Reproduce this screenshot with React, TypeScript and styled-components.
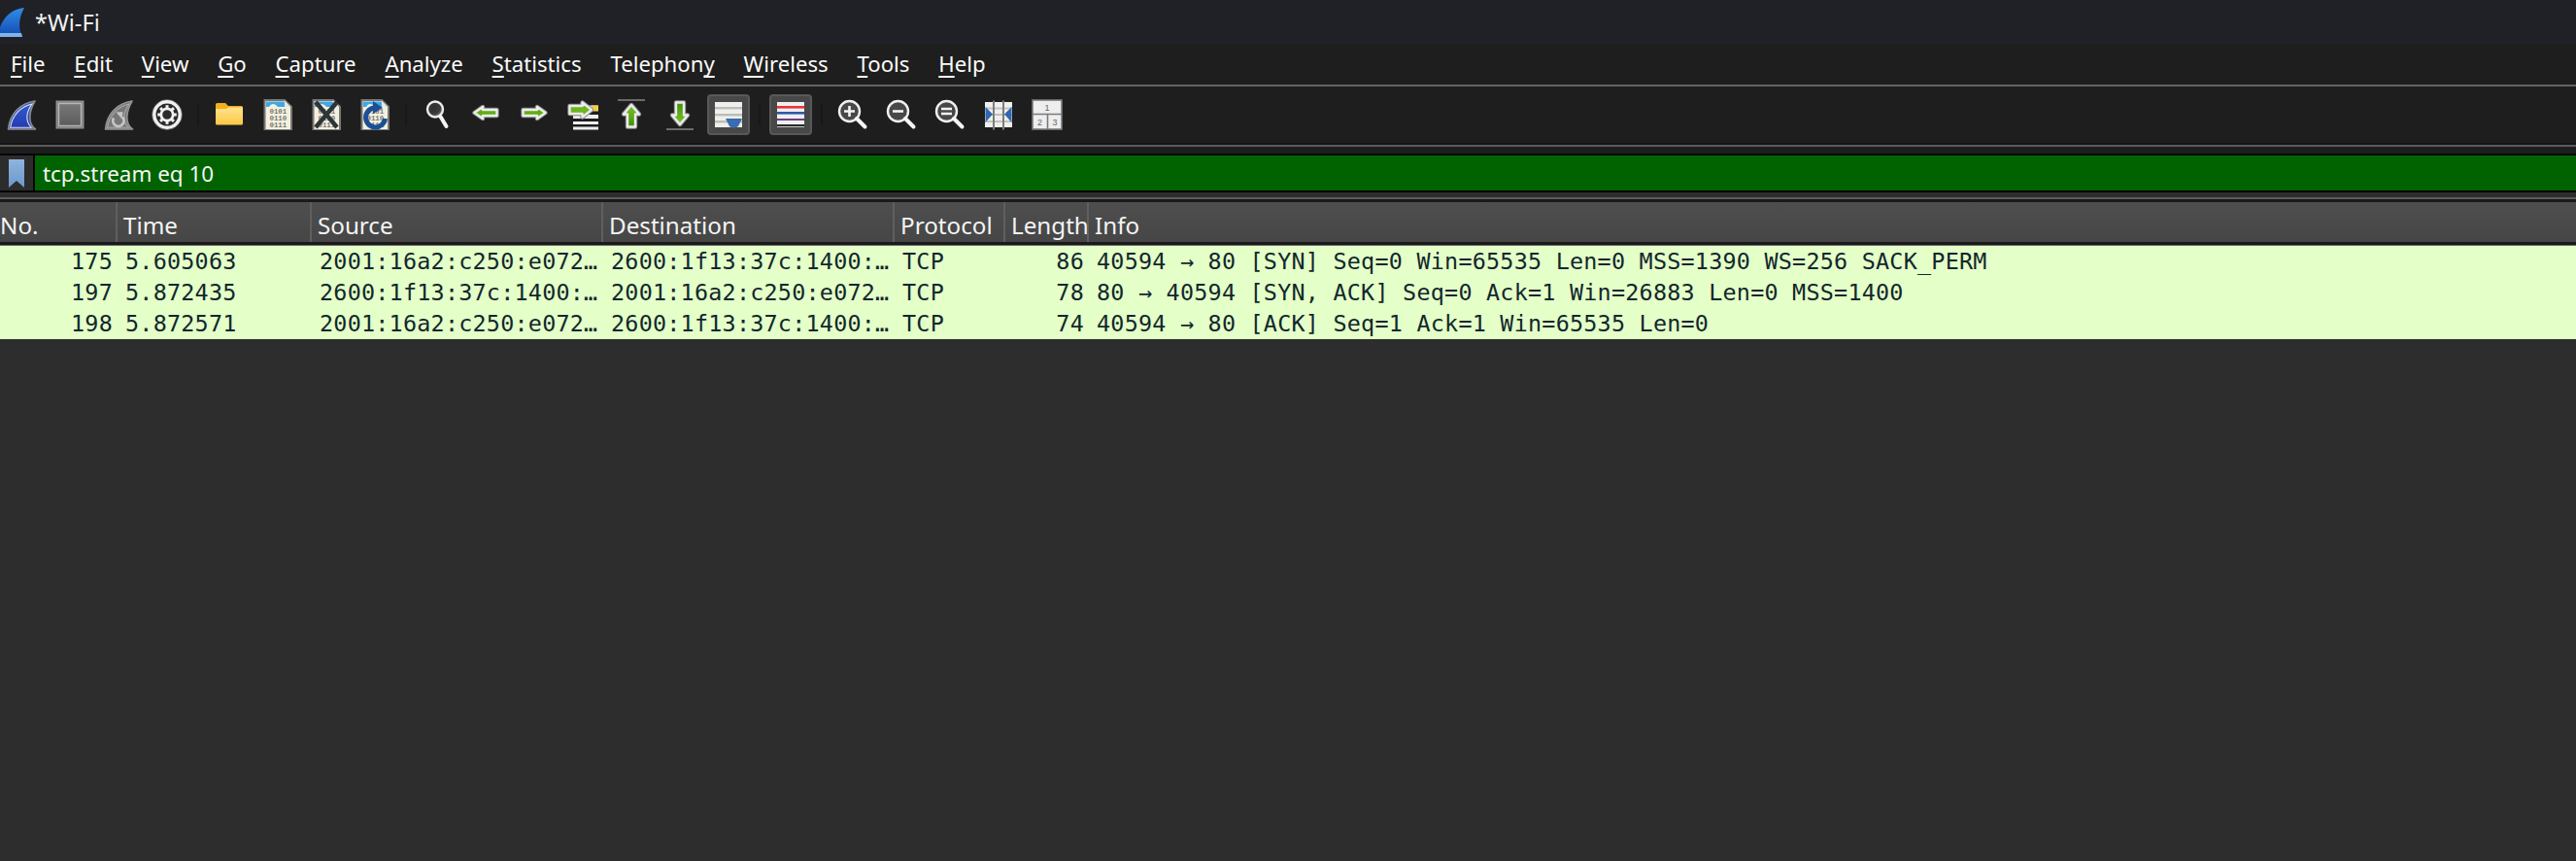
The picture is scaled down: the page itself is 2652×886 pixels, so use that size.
import React from 'react';
import styled, { createGlobalStyle } from 'styled-components';

const GlobalStyle = createGlobalStyle`
  html, body {
    margin: 0;
    padding: 0;
    background: #2d2d2d;
  }
`;

const uiFont = `"Noto Sans", "Open Sans", sans-serif`;

const menus = [
  ['', 'F', 'ile'],
  ['', 'E', 'dit'],
  ['', 'V', 'iew'],
  ['', 'G', 'o'],
  ['', 'C', 'apture'],
  ['', 'A', 'nalyze'],
  ['', 'S', 'tatistics'],
  ['Telephon', 'y', ''],
  ['', 'W', 'ireless'],
  ['', 'T', 'ools'],
  ['', 'H', 'elp'],
];

const columns = ['No.', 'Time', 'Source', 'Destination', 'Protocol', 'Length', 'Info'];

const packets = [
  {
    no: '175',
    time: '5.605063',
    src: '2001:16a2:c250:e072…',
    dst: '2600:1f13:37c:1400:…',
    proto: 'TCP',
    len: '86',
    info: '40594 → 80 [SYN] Seq=0 Win=65535 Len=0 MSS=1390 WS=256 SACK_PERM',
  },
  {
    no: '197',
    time: '5.872435',
    src: '2600:1f13:37c:1400:…',
    dst: '2001:16a2:c250:e072…',
    proto: 'TCP',
    len: '78',
    info: '80 → 40594 [SYN, ACK] Seq=0 Ack=1 Win=26883 Len=0 MSS=1400',
  },
  {
    no: '198',
    time: '5.872571',
    src: '2001:16a2:c250:e072…',
    dst: '2600:1f13:37c:1400:…',
    proto: 'TCP',
    len: '74',
    info: '40594 → 80 [ACK] Seq=1 Ack=1 Win=65535 Len=0',
  },
];

const Svg = ({ children }: { children: React.ReactNode }) => (
  <svg width="32" height="32" viewBox="0 0 32 32" fill="none">
    {children}
  </svg>
);

const sharkPath = 'M30 2 C15 4 4 15 2.5 31 H30.5 C22 25 24 12 30 2 Z';
const sharkInner = 'M27 5 C16 7.5 6.5 16 4.7 29.3 H26.5 C19.5 23 21 13 27 5 Z';

const SharkIcon = () => (
  <Svg>
    <defs>
      <linearGradient id="sharkBlue" x1="0" y1="0" x2="0" y2="1">
        <stop offset="0" stopColor="#3560d0" />
        <stop offset="1" stopColor="#2438b0" />
      </linearGradient>
    </defs>
    <path d={sharkPath} fill="url(#sharkBlue)" stroke="#8c8c8c" strokeWidth="1.6" strokeLinejoin="round" />
    <path d={sharkInner} stroke="#dfe3ee" strokeWidth="1.1" />
  </Svg>
);

const StopIcon = () => (
  <Svg>
    <defs>
      <linearGradient id="stopGrey" x1="0" y1="0" x2="0" y2="1">
        <stop offset="0" stopColor="#7a7a7a" />
        <stop offset="1" stopColor="#595959" />
      </linearGradient>
    </defs>
    <rect x="2.5" y="2.5" width="27" height="27" fill="url(#stopGrey)" stroke="#8e8e8e" strokeWidth="2" />
    <rect x="4.5" y="4.5" width="23" height="23" stroke="#b8b8b8" strokeWidth="1.4" />
  </Svg>
);

const RestartIcon = () => (
  <Svg>
    <path d={sharkPath} fill="#777" stroke="#949494" strokeWidth="1.6" strokeLinejoin="round" />
    <path d={sharkInner} stroke="#a8a8a8" strokeWidth="1.1" />
    <path d="M11 19.5 A5.6 5.6 0 1 0 20 18.5" stroke="#c4c4c4" strokeWidth="2.8" />
    <path d="M13.5 13.5 L20.5 13 L19.5 20.5 Z" fill="#c4c4c4" />
  </Svg>
);

const gearTeeth = [0, 45, 90, 135, 180, 225, 270, 315];

const GearIcon = () => (
  <Svg>
    <circle cx="16" cy="16" r="15.4" stroke="#6e6e6e" strokeWidth="1" />
    <circle cx="16" cy="16" r="13.2" fill="#2a2a2a" stroke="#f0f0f0" strokeWidth="3.4" />
    <circle cx="16" cy="16" r="6.2" stroke="#f0f0f0" strokeWidth="2.8" />
    {gearTeeth.map((a) => (
      <rect key={a} x="14.5" y="6.2" width="3" height="3.4" fill="#f0f0f0" transform={`rotate(${a} 16 16)`} />
    ))}
  </Svg>
);

const FolderIcon = () => (
  <Svg>
    <defs>
      <linearGradient id="folderFill" x1="0" y1="0" x2="0" y2="1">
        <stop offset="0" stopColor="#ffe28a" />
        <stop offset="1" stopColor="#fcc845" />
      </linearGradient>
    </defs>
    <path d="M2 5.5 Q2 4 3.5 4 H12 L15 7 H28.5 Q30 7 30 8.5 V12 H2 Z" fill="#f2ae1c" />
    <path d="M2 10 H13 L15 8.5 H30 V25 Q30 26.5 28.5 26.5 H3.5 Q2 26.5 2 25 Z" fill="url(#folderFill)" />
  </Svg>
);

const FileBase = ({ children }: { children?: React.ReactNode }) => (
  <Svg>
    <path d="M2.5 1 H23 L30 8 V32 H2.5 Z" fill="#f3f1dd" stroke="#777" strokeWidth="2" />
    <path d="M4 2.5 H22 L28 8 H16 C13 4 9 4 7 8 H4 Z" fill="#3fa7e6" />
    <path d="M23 1.5 V8.2 H29.5 Z" fill="#e6e6e6" />
    <g fontFamily='"Liberation Mono", monospace' fontSize="7.4" fill="#777" fontWeight="bold">
      <text x="7.5" y="15">0101</text>
      <text x="7.5" y="22">0110</text>
      <text x="7.5" y="29">0111</text>
    </g>
    {children}
  </Svg>
);

const CloseFileIcon = () => (
  <FileBase>
    <path d="M5 3 L27 29 M27 3 L5 29" stroke="#2e3538" strokeWidth="4.5" />
  </FileBase>
);

const ReloadFileIcon = () => (
  <FileBase>
    <path d="M15 9 A10 10 0 1 0 26.5 20" stroke="#1c4f96" strokeWidth="5" />
    <path d="M14 2 L24 9 L14 15 Z" fill="#1c4f96" />
  </FileBase>
);

const FindIcon = () => (
  <Svg>
    <defs>
      <radialGradient id="lensFill" cx="0.4" cy="0.35" r="0.7">
        <stop offset="0" stopColor="#303030" />
        <stop offset="0.6" stopColor="#3a3a3a" />
        <stop offset="1" stopColor="#8a8a8a" />
      </radialGradient>
    </defs>
    <circle cx="14" cy="10.5" r="8" fill="url(#lensFill)" stroke="#ececec" strokeWidth="2.4" />
    <path d="M19.5 18 L25.5 28" stroke="#f4f4f4" strokeWidth="4" strokeLinecap="round" />
  </Svg>
);

const ZoomIcon = ({ mark }: { mark: 'in' | 'out' | 'reset' }) => (
  <Svg>
    <circle cx="12.5" cy="12.5" r="10.5" fill="#484848" stroke="#f0f0f0" strokeWidth="2.4" />
    <path d="M20 20 L28.5 28.5" stroke="#f4f4f4" strokeWidth="4" strokeLinecap="round" />
    {mark === 'in' && <path d="M7 12.5 H18 M12.5 7 V18" stroke="#f4f4f4" strokeWidth="2.6" />}
    {mark === 'out' && <path d="M7 12.5 H18" stroke="#f4f4f4" strokeWidth="2.6" />}
    {mark === 'reset' && <path d="M7 10 H18 M7 15 H18" stroke="#f4f4f4" strokeWidth="2.4" />}
  </Svg>
);

const Arrow = ({ d, fill = '#5fae12' }: { d: string; fill?: string }) => (
  <>
    <path d={d} stroke="#8a8a8a" strokeWidth="4.4" strokeLinejoin="round" />
    <path d={d} fill={fill} stroke="#ececec" strokeWidth="2.4" strokeLinejoin="round" />
  </>
);

const BackIcon = () => (
  <Svg>
    <Arrow d="M4.5 14 L13 8 V11 H27.5 V17 H13 V20 Z" />
  </Svg>
);

const ForwardIcon = () => (
  <Svg>
    <Arrow d="M27.5 14 L19 8 V11 H4.5 V17 H19 V20 Z" />
  </Svg>
);

const GoToIcon = () => (
  <Svg>
    <rect x="6" y="6.5" width="26" height="5" fill="#eee" />
    <rect x="25" y="6.5" width="7" height="6" fill="#f2d04a" />
    <rect x="6" y="16" width="26" height="4" fill="#eee" />
    <rect x="6" y="23" width="26" height="3" fill="#eee" />
    <rect x="6" y="28.5" width="26" height="3" fill="#eee" />
    <Arrow d="M25 11 L15.5 3.5 V7 H2.5 V15 H15.5 V18.5 Z" fill="#6cb61e" />
  </Svg>
);

const FirstIcon = () => (
  <Svg>
    <path d="M2 1 H30" stroke="#6b6b6b" strokeWidth="2" />
    <defs>
      <linearGradient id="upGreen" x1="0" y1="0" x2="0" y2="1">
        <stop offset="0" stopColor="#7cc528" />
        <stop offset="1" stopColor="#3f8f0a" />
      </linearGradient>
    </defs>
    <Arrow d="M16 6 L24 15.5 H20 V28.5 H12 V15.5 H8 Z" fill="url(#upGreen)" />
  </Svg>
);

const LastIcon = () => (
  <Svg>
    <path d="M2 31 H30" stroke="#6b6b6b" strokeWidth="2" />
    <defs>
      <linearGradient id="downGreen" x1="0" y1="0" x2="0" y2="1">
        <stop offset="0" stopColor="#3f8f0a" />
        <stop offset="1" stopColor="#7cc528" />
      </linearGradient>
    </defs>
    <Arrow d="M16 26 L24 16.5 H20 V3.5 H12 V16.5 H8 Z" fill="url(#downGreen)" />
  </Svg>
);

const AutoScrollIcon = () => (
  <Svg>
    <rect x="2" y="3" width="28" height="26" fill="#efefef" />
    <rect x="2" y="8" width="28" height="2.4" fill="#bdbdb2" />
    <rect x="2" y="15" width="28" height="2.4" fill="#bdbdb2" />
    <rect x="2" y="22" width="28" height="2.4" fill="#bdbdb2" />
    <path d="M13 20 H30 L26 28 Q21.5 31.5 17 28 Z" fill="#3a6cb0" />
  </Svg>
);

const ColorizeIcon = () => (
  <Svg>
    <rect x="2" y="3" width="28" height="26" fill="#efefef" />
    <rect x="2" y="7" width="28" height="2.6" fill="#e8333a" />
    <rect x="2" y="13" width="28" height="2.6" fill="#2f5aa8" />
    <rect x="2" y="20" width="28" height="2" fill="#6b3d85" />
    <rect x="2" y="26" width="28" height="2.2" fill="#2a2a2a" />
  </Svg>
);

const ResizeIcon = () => (
  <Svg>
    <rect x="2" y="3" width="28" height="26" fill="#efefef" />
    <rect x="2" y="8.5" width="28" height="2" fill="#c2c2b6" />
    <rect x="2" y="15" width="28" height="2" fill="#c2c2b6" />
    <rect x="2" y="22" width="28" height="2" fill="#c2c2b6" />
    <rect x="10" y="1.5" width="2" height="30" fill="#7c7c7c" />
    <rect x="20" y="1.5" width="2" height="30" fill="#7c7c7c" />
    <path d="M2.5 8 L10 15.5 L2.5 24 Z M29.5 8 L22 15.5 L29.5 24 Z" fill="#2f68b0" />
  </Svg>
);

const PanesIcon = () => (
  <Svg>
    <rect x="1" y="1" width="30" height="30" fill="#eeeeee" stroke="#7a7a7a" strokeWidth="1.6" />
    <path d="M1 15.5 H31 M16.5 15.5 V31" stroke="#7a7a7a" strokeWidth="1.6" />
    <g fontFamily='"Liberation Sans", sans-serif' fontSize="9" fill="#666" textAnchor="middle">
      <text x="16" y="11.5">1</text>
      <text x="8.5" y="26.5">2</text>
      <text x="24" y="26.5">3</text>
    </g>
  </Svg>
);

const App = () => {
  return (
    <Page>
      <GlobalStyle />
      <TitleBar>
        <svg width="25" height="30" viewBox="0 0 25 30" fill="none">
          <defs>
            <linearGradient id="appShark" x1="0" y1="0" x2="0" y2="1">
              <stop offset="0" stopColor="#2f8ee8" />
              <stop offset="1" stopColor="#1448b4" />
            </linearGradient>
          </defs>
          <path d="M25 0 C13 1 4 9 0 20 V30 H23 C18 20 20 9 25 0 Z" fill="url(#appShark)" />
          <path d="M0 26 H22 L23 30 H0 Z" fill="#7fb4e8" />
        </svg>
        <TitleText>*Wi-Fi</TitleText>
      </TitleBar>
      <MenuBar>
        {menus.map(([before, key, after]) => (
          <MenuItem key={before + key + after}>
            {before}
            <Mnemonic>{key}</Mnemonic>
            {after}
          </MenuItem>
        ))}
      </MenuBar>
      <Toolbar>
        <ToolButton><SharkIcon /></ToolButton>
        <ToolButton><StopIcon /></ToolButton>
        <ToolButton><RestartIcon /></ToolButton>
        <ToolButton><GearIcon /></ToolButton>
        <ToolSeparator />
        <ToolButton><FolderIcon /></ToolButton>
        <ToolButton><FileBase /></ToolButton>
        <ToolButton><CloseFileIcon /></ToolButton>
        <ToolButton><ReloadFileIcon /></ToolButton>
        <ToolSeparator />
        <ToolButton><FindIcon /></ToolButton>
        <ToolButton><BackIcon /></ToolButton>
        <ToolButton><ForwardIcon /></ToolButton>
        <ToolButton><GoToIcon /></ToolButton>
        <ToolButton><FirstIcon /></ToolButton>
        <ToolButton><LastIcon /></ToolButton>
        <ToolButton $pressed><AutoScrollIcon /></ToolButton>
        <ToolSeparator />
        <ToolButton $pressed><ColorizeIcon /></ToolButton>
        <ToolSeparator />
        <ToolButton><ZoomIcon mark="in" /></ToolButton>
        <ToolButton><ZoomIcon mark="out" /></ToolButton>
        <ToolButton><ZoomIcon mark="reset" /></ToolButton>
        <ToolButton><ResizeIcon /></ToolButton>
        <ToolButton><PanesIcon /></ToolButton>
      </Toolbar>
      <FilterBar>
        <FilterFrame>
          <BookmarkButton>
            <svg width="18" height="30" viewBox="0 0 18 30">
              <defs>
                <linearGradient id="bookmarkBlue" x1="0" y1="0" x2="0" y2="1">
                  <stop offset="0" stopColor="#8fb4de" />
                  <stop offset="1" stopColor="#6a98cc" />
                </linearGradient>
              </defs>
              <path d="M1 1 H17 V30 L9 23 L1 30 Z" fill="url(#bookmarkBlue)" />
            </svg>
          </BookmarkButton>
          <FilterInput>tcp.stream eq 10</FilterInput>
        </FilterFrame>
      </FilterBar>
      <PacketList>
        <HeaderRow>
          {columns.map((c, i) => (
            <HeaderCell key={c} $first={i === 0}>{c}</HeaderCell>
          ))}
        </HeaderRow>
        <Rows>
          {packets.map((p) => (
            <PacketRow key={p.no}>
              <Cell $right>{p.no}</Cell>
              <Cell>{p.time}</Cell>
              <Cell>{p.src}</Cell>
              <Cell>{p.dst}</Cell>
              <Cell>{p.proto}</Cell>
              <Cell $right>{p.len}</Cell>
              <Cell>{p.info}</Cell>
            </PacketRow>
          ))}
        </Rows>
      </PacketList>
    </Page>
  );
};

export default App;

const Page = styled.div`
  display: flex;
  flex-direction: column;
  height: 100vh;
  overflow: hidden;
  background-color: #2d2d2d;
  font-family: ${uiFont};
  color: #f2f2f2;
`;

const TitleBar = styled.div`
  display: flex;
  align-items: center;
  height: 45px;
  background-color: #1f2126;

  svg {
    flex: none;
  }
`;

const TitleText = styled.span`
  margin-left: 11px;
  font-size: 23.5px;
`;

const MenuBar = styled.div`
  display: flex;
  align-items: center;
  gap: 29.8px;
  height: 40px;
  padding: 0 0 2px 11px;
  background-color: #1e1e1e;
  border-bottom: 2px solid #636363;
`;

const MenuItem = styled.span`
  font-size: 22.2px;
  color: #fafafa;
`;

const Mnemonic = styled.span`
  text-decoration: underline;
  text-decoration-skip-ink: none;
  text-underline-offset: 4px;
  text-decoration-thickness: 2px;
`;

const Toolbar = styled.div`
  display: flex;
  align-items: center;
  height: 58px;
  background-color: #1e1e1e;
  border-bottom: 2px solid #161616;
  box-shadow: 0 2px 0 #5a5a5a;
  margin-bottom: 2px;

  & > :first-child {
    margin-left: -3px;
  }
`;

const ToolButton = styled.div<{ $pressed?: boolean }>`
  display: flex;
  align-items: center;
  justify-content: center;
  flex: none;
  box-sizing: border-box;
  width: ${(p) => (p.$pressed ? '44px' : '50px')};
  height: ${(p) => (p.$pressed ? '42px' : '50px')};
  margin: ${(p) => (p.$pressed ? '0 3px' : '0')};
  border-radius: 4px;
  background-color: ${(p) => (p.$pressed ? '#484848' : 'transparent')};
  border: ${(p) => (p.$pressed ? '2px solid #585858' : 'none')};
`;

const ToolSeparator = styled.div`
  flex: none;
  width: 2px;
  height: 22px;
  margin: 0 6px;
  background-color: #181818;
`;

const FilterBar = styled.div`
  padding-top: 7px;
  background-color: #1e1e1e;
`;

const FilterFrame = styled.div`
  display: flex;
  height: 36px;
  border-top: 2px solid #050505;
  border-bottom: 2px solid #050505;
`;

const BookmarkButton = styled.div`
  display: flex;
  align-items: center;
  justify-content: center;
  flex: none;
  width: 34px;
  background-color: #2c2c2c;
  border-right: 2px solid #050505;
`;

const FilterInput = styled.div`
  flex: 1;
  display: flex;
  align-items: center;
  padding-left: 8px;
  background-color: #006300;
  color: #f5f5f5;
  font-size: 22.4px;
`;

const PacketList = styled.div`
  margin-top: 5px;
  background-color: #1a1a1a;
  box-shadow: inset 0 2px 0 #5c5c5c;
  padding-top: 5px;
  flex: 1;
  display: flex;
  flex-direction: column;
`;

const gridColumns = '121px 200px 300px 300px 114px 86px 1fr';

const HeaderRow = styled.div`
  display: grid;
  grid-template-columns: ${gridColumns};
  height: 41px;
  background-image: linear-gradient(#4e4e4e, #464646);
  border-bottom: 3px solid #1a1a1a;
  box-shadow: 0 1px 0 #6b6b6b;
`;

const HeaderCell = styled.div<{ $first?: boolean }>`
  display: flex;
  align-items: center;
  padding: 6px 0 0 ${(p) => (p.$first ? '0' : '6px')};
  border-right: 2px solid #5f5f5f;
  font-size: 24.2px;
  color: #f4f4f4;
  white-space: nowrap;

  &:last-child {
    border-right: none;
  }
`;

const Rows = styled.div`
  margin-top: 1px;
  background-color: #2d2d2d;
  flex: 1;
`;

const PacketRow = styled.div`
  display: grid;
  grid-template-columns: ${gridColumns};
  height: 32px;
  align-items: center;
  background-color: #e4ffc7;
`;

const Cell = styled.div<{ $right?: boolean }>`
  padding: 0 ${(p) => (p.$right ? '5px' : '8px')} 0 8px;
  text-align: ${(p) => (p.$right ? 'right' : 'left')};
  font-family: "DejaVu Sans Mono", "Liberation Mono", monospace;
  font-size: 23.4px;
  letter-spacing: 0.24px;
  color: #12272e;
  white-space: nowrap;
`;
